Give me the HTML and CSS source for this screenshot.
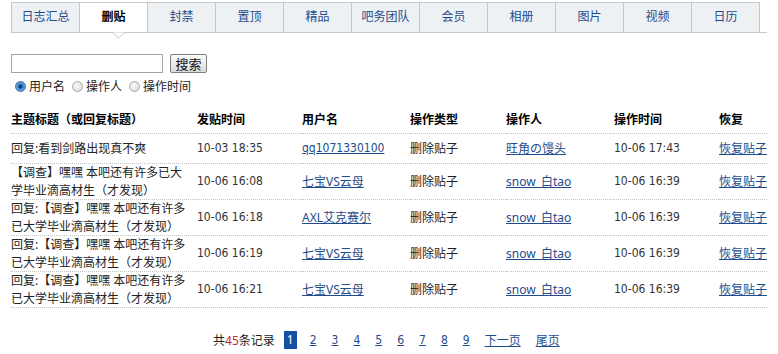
FILE: index.html
```html
<!DOCTYPE html>
<html lang="zh-CN">
<head>
<meta charset="utf-8">
<title>删贴日志</title>
<link rel="stylesheet" href="styles.css">
</head>
<body>
<div class="page">
  <ul class="tabs">
    <li class="tab">日志汇总</li>
    <li class="tab active">删贴<svg class="caret" width="13" height="7" viewBox="0 0 13 7"><polyline points="0.5,0.5 6.5,6 12.5,0.5" fill="#fff" stroke="#c8c8c8" stroke-width="1"/></svg></li>
    <li class="tab">封禁</li>
    <li class="tab">置顶</li>
    <li class="tab">精品</li>
    <li class="tab">吧务团队</li>
    <li class="tab">会员</li>
    <li class="tab">相册</li>
    <li class="tab">图片</li>
    <li class="tab">视频</li>
    <li class="tab">日历</li>
  </ul>

  <form class="search">
    <div class="search-row">
      <input class="kw" type="text">
      <button class="btn" type="button">搜索</button>
    </div>
    <div class="radios">
      <label class="opt"><input class="rd" type="radio" name="by" checked>用户名</label>
      <label class="opt"><input class="rd" type="radio" name="by">操作人</label>
      <label class="opt"><input class="rd" type="radio" name="by">操作时间</label>
    </div>
  </form>

  <table class="log">
    <colgroup>
      <col class="c-title"><col class="c-time"><col class="c-user"><col class="c-type"><col class="c-op"><col class="c-optime"><col class="c-rec">
    </colgroup>
    <thead>
      <tr><th>主题标题（或回复标题）</th><th>发贴时间</th><th>用户名</th><th>操作类型</th><th>操作人</th><th>操作时间</th><th>恢复</th></tr>
    </thead>
    <tbody>
      <tr>
        <td>回复:看到剑路出现真不爽</td>
        <td class="num">10-03 18:35</td>
        <td><a class="lat" href="#">qq1071330100</a></td>
        <td>删除贴子</td>
        <td><a href="#">旺角の馒头</a></td>
        <td class="num">10-06 17:43</td>
        <td><a href="#">恢复贴子</a></td>
      </tr>
      <tr>
        <td>【调查】嘿嘿 本吧还有许多已大<br>学毕业滴高材生（才发现）</td>
        <td class="num">10-06 16:08</td>
        <td><a href="#">七宝VS云母</a></td>
        <td>删除贴子</td>
        <td><a href="#">snow_白tao</a></td>
        <td class="num">10-06 16:39</td>
        <td><a href="#">恢复贴子</a></td>
      </tr>
      <tr>
        <td>回复:【调查】嘿嘿 本吧还有许多<br>已大学毕业滴高材生（才发现）</td>
        <td class="num">10-06 16:18</td>
        <td><a href="#">AXL艾克赛尔</a></td>
        <td>删除贴子</td>
        <td><a href="#">snow_白tao</a></td>
        <td class="num">10-06 16:39</td>
        <td><a href="#">恢复贴子</a></td>
      </tr>
      <tr>
        <td>回复:【调查】嘿嘿 本吧还有许多<br>已大学毕业滴高材生（才发现）</td>
        <td class="num">10-06 16:19</td>
        <td><a href="#">七宝VS云母</a></td>
        <td>删除贴子</td>
        <td><a href="#">snow_白tao</a></td>
        <td class="num">10-06 16:39</td>
        <td><a href="#">恢复贴子</a></td>
      </tr>
      <tr>
        <td>回复:【调查】嘿嘿 本吧还有许多<br>已大学毕业滴高材生（才发现）</td>
        <td class="num">10-06 16:21</td>
        <td><a href="#">七宝VS云母</a></td>
        <td>删除贴子</td>
        <td><a href="#">snow_白tao</a></td>
        <td class="num">10-06 16:39</td>
        <td><a href="#">恢复贴子</a></td>
      </tr>
    </tbody>
  </table>

  <div class="pager">
    <span class="total">共<em class="count">45</em>条记录</span>
    <span class="cur">1</span>
    <a class="lat" href="#">2</a>
    <a class="lat" href="#">3</a>
    <a class="lat" href="#">4</a>
    <a class="lat" href="#">5</a>
    <a class="lat" href="#">6</a>
    <a class="lat" href="#">7</a>
    <a class="lat" href="#">8</a>
    <a class="lat" href="#">9</a>
    <a href="#">下一页</a>
    <a href="#">尾页</a>
  </div>
</div>
</body>
</html>
```

FILE: styles.css
```css
html, body {
  margin: 0;
  padding: 0;
  background: #fff;
}

body {
  font-family: "Noto Sans", "Noto Sans CJK SC", sans-serif;
  font-size: 12px;
  color: #222;
}

.page {
  padding: 2px 0 0 11px;
  width: 756px;
}

/* Tabs */
.tabs {
  list-style: none;
  margin: 0;
  padding: 0;
  display: flex;
  border-left: 1px solid #c8c8c8;
  border-bottom: 1px solid #c8c8c8;
  height: 30px;
}

.tab {
  position: relative;
  box-sizing: border-box;
  width: 68px;
  height: 30px;
  border-top: 1px solid #c8c8c8;
  border-right: 1px solid #c8c8c8;
  background: #eef1f4;
  color: #1f4c8c;
  text-align: center;
  line-height: 28px;
}

.tab.active {
  background: #fff;
  color: #000;
  font-weight: bold;
}

.caret {
  position: absolute;
  left: 32px;
  top: 29px;
  display: block;
}

/* Search */
.search {
  margin: 21px 0 0;
}

.search-row {
  display: flex;
  align-items: center;
  gap: 7px;
}

.kw {
  box-sizing: border-box;
  width: 152px;
  height: 19px;
  margin: 0;
  padding: 0 2px;
  border: 1px solid #a5a5a5;
  font-size: 12px;
}

.btn {
  box-sizing: border-box;
  height: 19px;
  width: 37px;
  margin: 0;
  padding: 0;
  border: 1px solid #7d7d7d;
  border-radius: 2px;
  background: linear-gradient(#fbfbfb, #dcdcdc);
  font-family: "Noto Sans CJK SC", sans-serif;
  font-size: 13px;
  line-height: 16px;
  color: #111;
}

.radios {
  display: flex;
  align-items: center;
  margin-top: 5px;
  height: 16px;
}

.opt {
  display: flex;
  align-items: center;
  margin-right: 3px;
}

.rd {
  appearance: none;
  -webkit-appearance: none;
  box-sizing: border-box;
  width: 11px;
  height: 11px;
  margin: 0 3px 0 4px;
  border: 1px solid #a9a9a9;
  border-radius: 50%;
  background: radial-gradient(circle at 40% 40%, #fafafa 0, #d6d6d6 100%);
}

.rd:checked {
  border-color: #3a6ea5;
  background: radial-gradient(circle, #12407a 0, #12407a 1.6px, #3c86cf 2.4px, #8fc0ea 100%);
}

/* Table */
.log {
  width: 756px;
  margin-top: 10px;
  border-collapse: collapse;
  table-layout: fixed;
}

.c-title { width: 186px; }
.c-time { width: 105px; }
.c-user { width: 108px; }
.c-type { width: 96px; }
.c-op { width: 108px; }
.c-optime { width: 105px; }
.c-rec { width: 48px; }

.log th,
.log td {
  padding: 0;
  height: 29px;
  text-align: left;
  vertical-align: middle;
  border-bottom: 1px dotted #c4c4c4;
  white-space: nowrap;
}

.log th {
  font-weight: bold;
  color: #000;
}

.log td {
  line-height: 17.5px;
  color: #222;
}

.log td.num {
  font-family: "DejaVu Sans Condensed", "DejaVu Sans", sans-serif;
  font-size: 12px;
  color: #333;
}

.lat {
  font-family: "DejaVu Sans Condensed", "DejaVu Sans", sans-serif;
  font-size: 12px;
}

.log a {
  color: #1f4c8c;
  text-decoration: underline;
}

/* Pager */
.pager {
  display: flex;
  align-items: center;
  gap: 15px;
  margin-top: 23px;
  padding-left: 202px;
  height: 18px;
}

.pager a {
  color: #1f4c8c;
  text-decoration: underline;
}

.total {
  margin-right: -6px;
  color: #222;
}

.count {
  font-style: normal;
  color: #c0282d;
}

.cur {
  display: inline-block;
  height: 18px;
  line-height: 18px;
  padding: 0 3px;
  margin-right: -2px;
  background: #1650a2;
  color: #fff;
}
```
